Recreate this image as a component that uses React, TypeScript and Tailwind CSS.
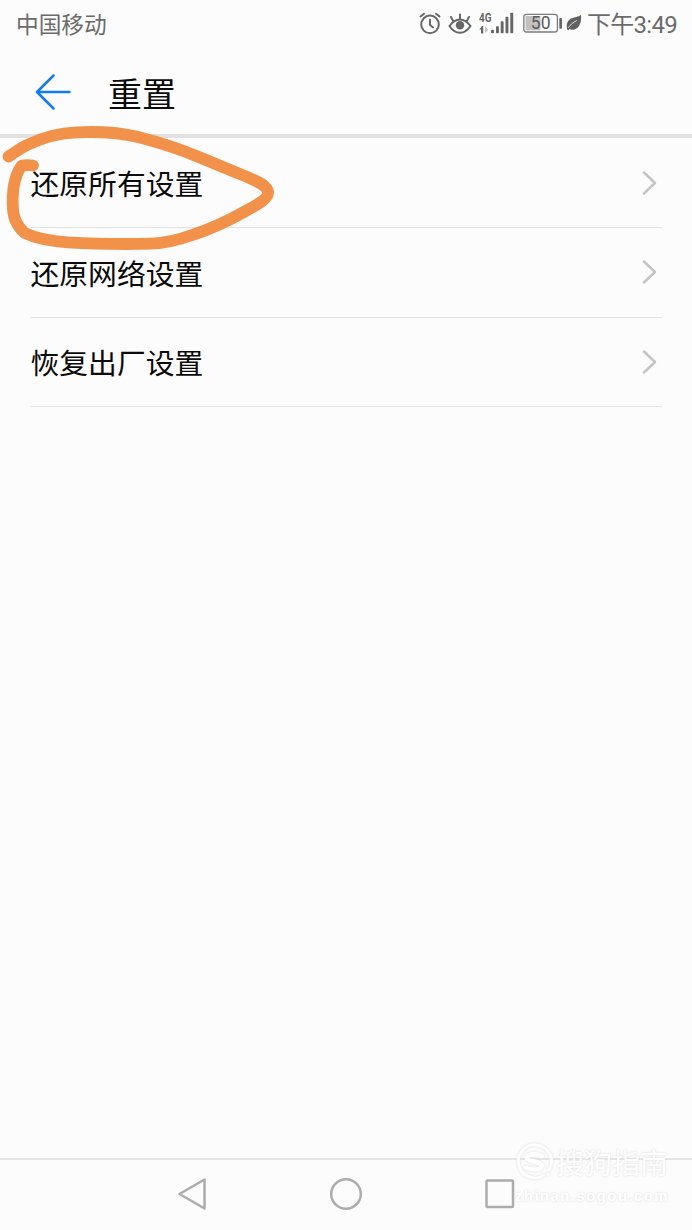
import React from 'react';

const SETTINGS = ['还原所有设置', '还原网络设置', '恢复出厂设置'];

const SIGNAL_BARS = [
  { x: 16.5, h: 3.5 },
  { x: 21.5, h: 7 },
  { x: 26.2, h: 12 },
  { x: 31, h: 16.5 },
  { x: 35.8, h: 20.5 },
];

const AlarmIcon = () => (
  <svg className="absolute left-[419px] top-[12px]" width="22" height="23" viewBox="0 0 22 23" fill="none" stroke="#676767" strokeWidth="2" strokeLinecap="round">
    <circle cx="11" cy="12.4" r="8.8" />
    <path d="M11 7.8v5l3 2.6M1.5 4.5 5 1.8M20.5 4.5 17 1.8" />
  </svg>
);

const EyeIcon = () => (
  <svg className="absolute left-[448px] top-[13px]" width="25" height="22" viewBox="0 0 25 22" fill="none" stroke="#676767" strokeWidth="2" strokeLinecap="round">
    <path d="M1.5 13C4.4 8.8 8 6.5 12 6.5s7.4 2.3 10.5 6.5c-3 4.5-6.5 6.8-10.5 6.8S4.4 17.5 1.5 13Z" />
    <path d="M12 1.5v4.5M3 4l2.2 4M21 4l-2.2 4" />
    <circle cx="12" cy="12.3" r="4.2" fill="#676767" stroke="none" />
  </svg>
);

const SignalIcon = () => (
  <svg className="absolute left-[475px] top-[10px]" width="40" height="26" viewBox="0 0 40 26" fill="#676767">
    <text x="4" y="12" fontFamily="Roboto, 'Liberation Sans', sans-serif" fontSize="12.5" fontWeight="700" textLength="12.5" lengthAdjust="spacingAndGlyphs">4G</text>
    <path d="M4.3 19.5 7 16H8.2v7.500H6V19.5Z" />
    <path d="M10 16v7.500l3.300-3.800Z" fill="#c4c4c4" />
    {SIGNAL_BARS.map(({ x, h }) => (
      <rect key={x} x={x - 0.5} y={23.3 - h} width="2.9" height={h} rx="0.8" />
    ))}
  </svg>
);

const BatteryIcon = () => (
  <svg className="absolute left-[523px] top-[13px]" width="41" height="21" viewBox="0 0 41 21">
    <rect x="0.8" y="1.3" width="33.6" height="17.7" rx="2.5" fill="none" stroke="#7b7b7b" strokeWidth="1.3" />
    <rect x="2.5" y="3" width="15" height="14.3" fill="#c1c1c1" />
    <rect x="36.3" y="5" width="2.7" height="10.8" rx="0.8" fill="#676767" />
    <text x="17.7" y="16.3" textAnchor="middle" fontFamily="Roboto, 'Liberation Sans', sans-serif" fontSize="17.5" fill="#5a5a5a">50</text>
  </svg>
);

const LeafIcon = () => (
  <svg className="absolute left-[566px] top-[14px]" width="17" height="18" viewBox="0 0 17 18">
    <path d="M15 1c.5 5.500-.5 11-4.500 13.500-2.500 1.500-5 1.500-7 .6L2.300 16.300 1 15.300.8 12C.5 9 2 6 5 4.500 8 3 12 3.300 15 1Z" fill="#606060" />
    <path d="M2.200 13.800C4.500 10.500 7 8.700 10.800 6.500" fill="none" stroke="#fcfcfc" strokeWidth="0.8" />
  </svg>
);

const StatusBar = () => (
  <div className="relative flex h-[47px] items-center justify-between pl-4 pr-[15px] pt-px text-[#6b6b6b]">
    <span className="text-[22.7px] leading-none">中国移动</span>
    <AlarmIcon />
    <EyeIcon />
    <SignalIcon />
    <BatteryIcon />
    <LeafIcon />
    <span className="whitespace-nowrap pt-px font-[Roboto,'Noto_Sans_CJK_SC',sans-serif] text-[24px] leading-none tracking-[-0.7px]">下午3:49</span>
  </div>
);

const SettingRow = ({ label }: { label: string }) => (
  <div className="flex h-[89.6px] items-center justify-between border-b border-[#e3e3e3] pr-[5px]">
    <span className="pt-0.5 text-[28.8px] leading-none">{label}</span>
    <svg width="15" height="26" viewBox="0 0 15 26" fill="none" stroke="#c4c4c4" strokeWidth="2.5" strokeLinecap="round" strokeLinejoin="round">
      <path d="M2 2.5 13 13 2 23.5" />
    </svg>
  </div>
);

const Scribble = () => (
  <svg className="pointer-events-none absolute left-0 top-[120px]" width="290" height="140" viewBox="0 0 290 140" fill="none">
    <path
      d="M8.5 36.5C15 32.5 19 29 27 25 42 17.5 58 13 77 12.300c24-1 43 .2 61 4.700 22 5.500 43 12.500 62 20.500l35 14.500c17 7 30 11.500 32.700 18.500 2.500 7-9 13.500-21 20-17 9.500-34 18-53 24-17 6-29 8.800-42 9.200-27 .6-58 .2-84-1.400-15-1-32-4-43-9.300C15 104 13 96 12.700 84 12.500 68 15 54 22 45.500c3-.5 6-.5 11 0"
      stroke="#f29149"
      strokeWidth="11.8"
      strokeLinecap="round"
      strokeLinejoin="round"
    />
  </svg>
);

const Watermark = () => (
  <div className="absolute left-[515px] top-[1143px] w-[156px] text-white [filter:drop-shadow(0_0_1px_#dadada)]">
    <div className="flex h-[38px] items-center gap-[2px]">
      <svg width="39" height="39" viewBox="0 0 39 39" fill="none" stroke="#ffffff" strokeLinecap="round">
        <path d="M28.5 32.5A16.5 16.5 0 1 1 34 27" strokeWidth="3" />
        <path d="M27 13c-4-2.500-14-2.800-15 1.300-.8 5 15 3.500 14.500 8.700-.5 4.500-11 4-16 1.500" strokeWidth="4.5" />
        <circle cx="33" cy="31.5" r="1.5" fill="#ffffff" stroke="none" />
      </svg>
      <span className="whitespace-nowrap text-[28px] leading-none">搜狗指南</span>
    </div>
    <div className="mt-1.5 whitespace-nowrap font-['Liberation_Sans',sans-serif] text-[15px] font-bold leading-[18px] tracking-[1.4px]">zhinan.sogou.com</div>
  </div>
);

const App: React.FC = () => {
  return (
    <div className="relative flex h-[1230px] w-[692px] flex-col overflow-hidden bg-[#fcfcfc] font-['Noto_Sans_CJK_SC',sans-serif] text-[#0b0b0b]">
      <StatusBar />

      <header className="flex h-[91px] items-center gap-[37px] border-b-4 border-[#e1e1e1] pl-[35px] pt-[3px]">
        <svg width="36" height="36" viewBox="0 0 36 36" fill="none" stroke="#137bea" strokeWidth="2.5" strokeLinecap="round" strokeLinejoin="round">
          <path d="M18.5 1.5 2 18l16.500 16.500M2 18h32.500" />
        </svg>
        <h1 className="pt-px text-[34px] font-normal leading-none">重置</h1>
      </header>

      <main className="flex-1 px-[30.5px] pt-[0.4px]">
        {SETTINGS.map((label) => (
          <SettingRow key={label} label={label} />
        ))}
      </main>

      <nav className="flex h-[72px] items-center border-t-2 border-[#e5e5e5] pb-0.5 pl-[177px]">
        <svg width="30" height="34" viewBox="0 0 30 34" fill="none" stroke="#acacac" strokeWidth="2.5" strokeLinejoin="round">
          <path d="M27.5 2.5v29L2.5 17Z" />
        </svg>
        <svg className="ml-[122px]" width="34" height="34" viewBox="0 0 34 34" fill="none" stroke="#acacac" strokeWidth="2.5">
          <circle cx="17" cy="17" r="14.8" />
        </svg>
        <svg className="ml-[121px]" width="32" height="34" viewBox="0 0 32 34" fill="none" stroke="#acacac" strokeWidth="2.5" strokeLinejoin="round">
          <rect x="2.5" y="3.5" width="26.5" height="26.5" rx="1" />
        </svg>
      </nav>

      <Scribble />
      <Watermark />
    </div>
  );
};

export default App;
